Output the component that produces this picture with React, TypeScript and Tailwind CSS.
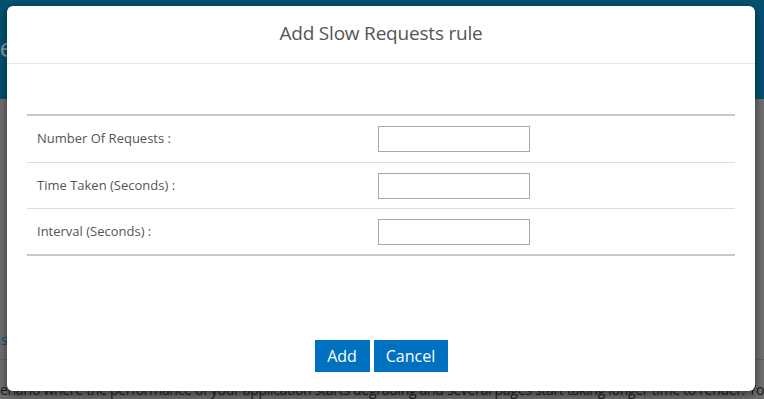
import React from "react";

const rows = ["Number Of Requests :", "Time Taken (Seconds) :", "Interval (Seconds) :"];

export default function App() {
  return (
    <div className="relative w-[764px] h-[399px] overflow-hidden bg-[#6e6e6e]" style={{ fontFamily: '"Open Sans", "Noto Sans", sans-serif' }}>
      {/* background page (dimmed) */}
      <div className="h-[99px] bg-[#03516f] pt-[34px]">
        <div className="-ml-[14px] text-[26px] leading-[26px] text-[#8a9aa2]">Le</div>
      </div>
      <div className="h-[226px]" />
      <div className="h-[35px] border-b border-[#5e5e5e]">
        <div className="-ml-[14px] pt-[4px] text-[14px] text-[#0d4f7a]">Last</div>
      </div>
      <div className="pt-[22px] whitespace-nowrap text-[14px] leading-[16px] tracking-[-0.3px] text-[#1c1c1c]">
        enario where the performance of your application starts degrading and several pages start taking longer time to render. You
      </div>

      {/* modal */}
      <div className="absolute left-[7px] top-[6px] w-[748px] h-[385px] bg-white rounded-[6px] shadow-[0_3px_9px_rgba(0,0,0,0.5)] flex flex-col">
        <div className="h-[58px] border-b border-[#e5e5e5] flex items-center justify-center">
          <div className="text-[19px] text-[#555] tracking-[-0.2px] pb-[2px]">Add Slow Requests rule</div>
        </div>
        <div className="px-[20px] pt-[50px]">
          <div className="border-t-2 border-b-2 border-[#c8c8c8]">
            {rows.map((r, i) => (
              <div key={r} className={`flex items-center h-[46px] ${i > 0 ? "border-t border-[#dddddd]" : ""}`}>
                <div className="w-[351px] pl-[10px] text-[13px] text-[#555]">{r}</div>
                <div className="w-[152px] h-[26px] border border-[#a9a9a9] bg-white" />
              </div>
            ))}
          </div>
        </div>
        <div className="flex-1" />
        <div className="flex justify-center gap-[4px] pb-[19px]">
          <button className="h-[32px] w-[55px] flex items-center justify-center bg-[#0070c0] text-white text-[16px]">Add</button>
          <button className="h-[32px] w-[74px] flex items-center justify-center bg-[#0070c0] text-white text-[16px]">Cancel</button>
        </div>
      </div>
    </div>
  );
}
